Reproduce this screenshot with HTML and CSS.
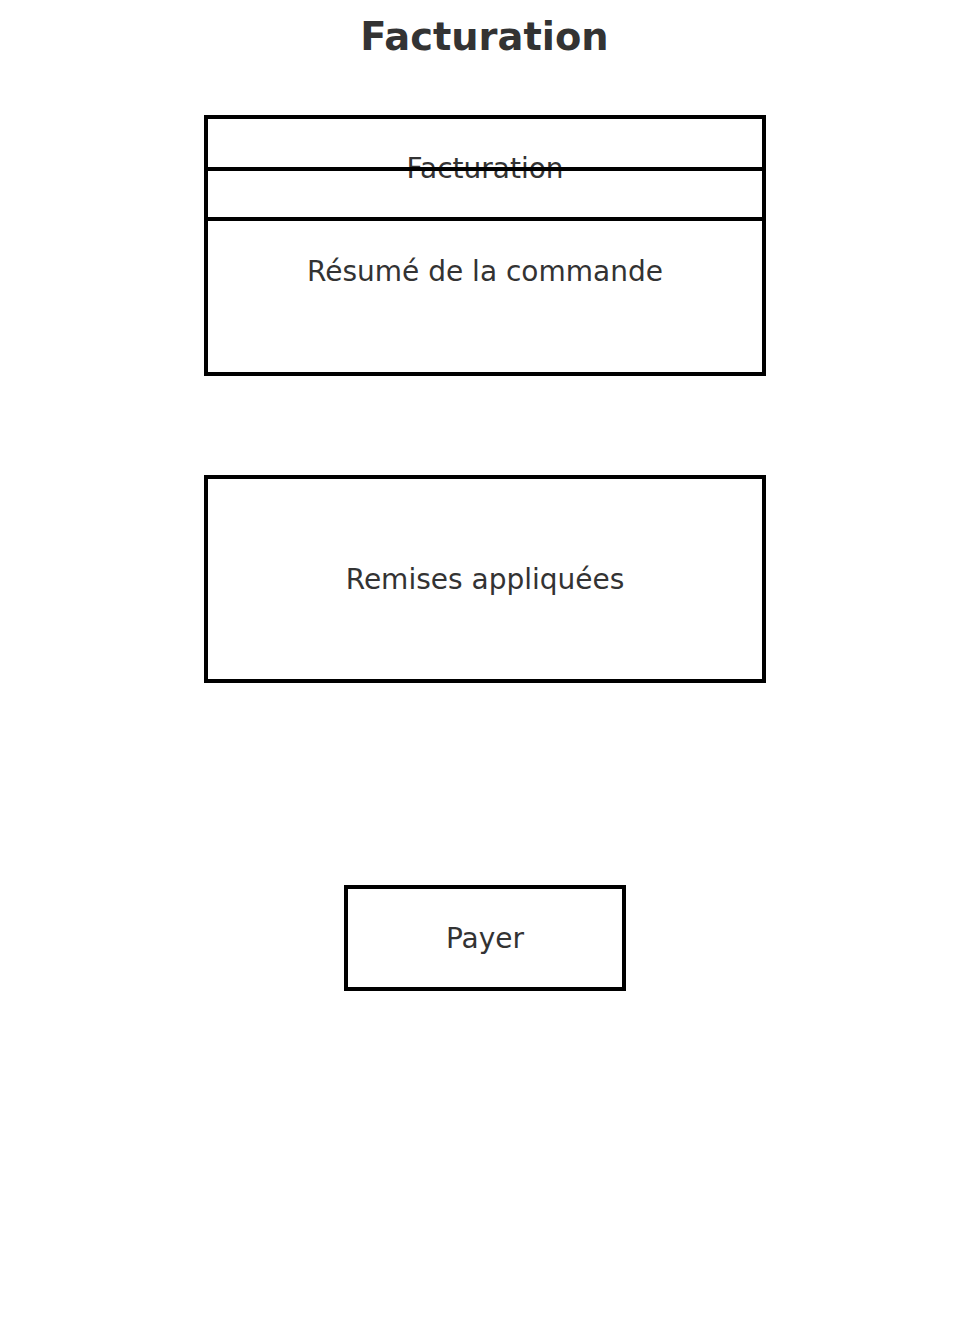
FILE: index.html
```html
<!DOCTYPE html>
<html lang="fr">
<head>
<meta charset="utf-8">
<title>Facturation</title>
<link rel="stylesheet" href="styles.css">
</head>
<body>
<h1 class="title">Facturation</h1>
<main class="diagram">
  <div class="box box-short">Facturation</div>
  <div class="box box-tall box-overlap">Résumé de la commande</div>
  <div class="box box-tall box-gap">Remises appliquées</div>
  <div class="box box-short box-button">Payer</div>
</main>
</body>
</html>
```

FILE: styles.css
```css
html, body {
  margin: 0;
  padding: 0;
  background: #ffffff;
}

body {
  width: 969px;
  min-height: 1318px;
  font-family: "DejaVu Sans", "Liberation Sans", sans-serif;
  color: #333333;
}

.title {
  margin: 0;
  padding-top: 15px;
  height: 44px;
  line-height: 44px;
  font-size: 38.4px;
  font-weight: bold;
  text-align: center;
  color: #333333;
}

.diagram {
  display: flex;
  flex-direction: column;
  align-items: center;
  margin-top: 56px;
  padding-left: 1px;
}

.box {
  box-sizing: border-box;
  width: 562px;
  border: 4px solid #000000;
  display: flex;
  align-items: center;
  justify-content: center;
  font-size: 28px;
  color: #333333;
}

.box-short {
  height: 106px;
}

.box-tall {
  height: 209px;
}

.box-overlap {
  margin-top: -54px;
}

.box-gap {
  height: 208px;
  margin-top: 99px;
}

.box-button {
  width: 282px;
  margin-top: 202px;
}
```
